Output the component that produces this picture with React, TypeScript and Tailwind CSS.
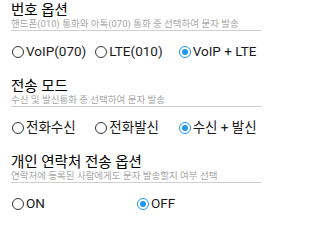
import React from "react";

type Opt = { label: string; checked?: boolean };
type Sec = { title: string; sub: string; cols: 2 | 3; opts: Opt[] };

const sections: Sec[] = [
  {
    title: "번호 옵션",
    sub: "핸드폰(010) 통화와 아톡(070) 통화 중 선택하여 문자 발송",
    cols: 3,
    opts: [{ label: "VoIP(070)" }, { label: "LTE(010)" }, { label: "VoIP + LTE", checked: true }],
  },
  {
    title: "전송 모드",
    sub: "수신 및 발신통화 중 선택하여 문자 발송",
    cols: 3,
    opts: [{ label: "전화수신" }, { label: "전화발신" }, { label: "수신 + 발신", checked: true }],
  },
  {
    title: "개인 연락처 전송 옵션",
    sub: "연락처에 등록된 사람에게도 문자 발송할지 여부 선택",
    cols: 2,
    opts: [{ label: "ON" }, { label: "OFF", checked: true }],
  },
];

function Radio({ opt }: { opt: Opt }) {
  return (
    <div className="flex items-center gap-[2px]">
      {opt.checked ? (
        <div className="w-[12px] h-[12px] rounded-full border-[1.5px] border-[#2196f3] flex items-center justify-center">
          <div className="w-[6px] h-[6px] rounded-full bg-[#2196f3]" />
        </div>
      ) : (
        <div className="w-[12px] h-[12px] rounded-full border-[1.3px] border-[#333]" />
      )}
      <span className="text-[13.5px] leading-[15px] text-[#1a1a1a]">{opt.label}</span>
    </div>
  );
}

export default function App() {
  return (
    <div
      className="w-[273px] h-[220px] bg-white overflow-hidden pt-[3px]"
      style={{ fontFamily: 'Roboto, "Noto Sans CJK KR", sans-serif' }}
    >
      {sections.map((s) => (
        <div key={s.title} className="h-[76px] px-[11px] flex flex-col">
          <div className="text-[14.5px] leading-[15px] text-[#000]">{s.title}</div>
          <div className="pb-[1px] text-[9.5px] leading-[11px] text-[#a8a8a8] border-b border-[#d0d0d0]">
            {s.sub}
          </div>
          <div className={s.cols === 3 ? "grid grid-cols-3 mt-[13px] pl-[1px]" : "grid grid-cols-2 mt-[13px] pl-[1px]"}>
            {s.opts.map((o) => (
              <Radio key={o.label} opt={o} />
            ))}
          </div>
        </div>
      ))}
    </div>
  );
}
